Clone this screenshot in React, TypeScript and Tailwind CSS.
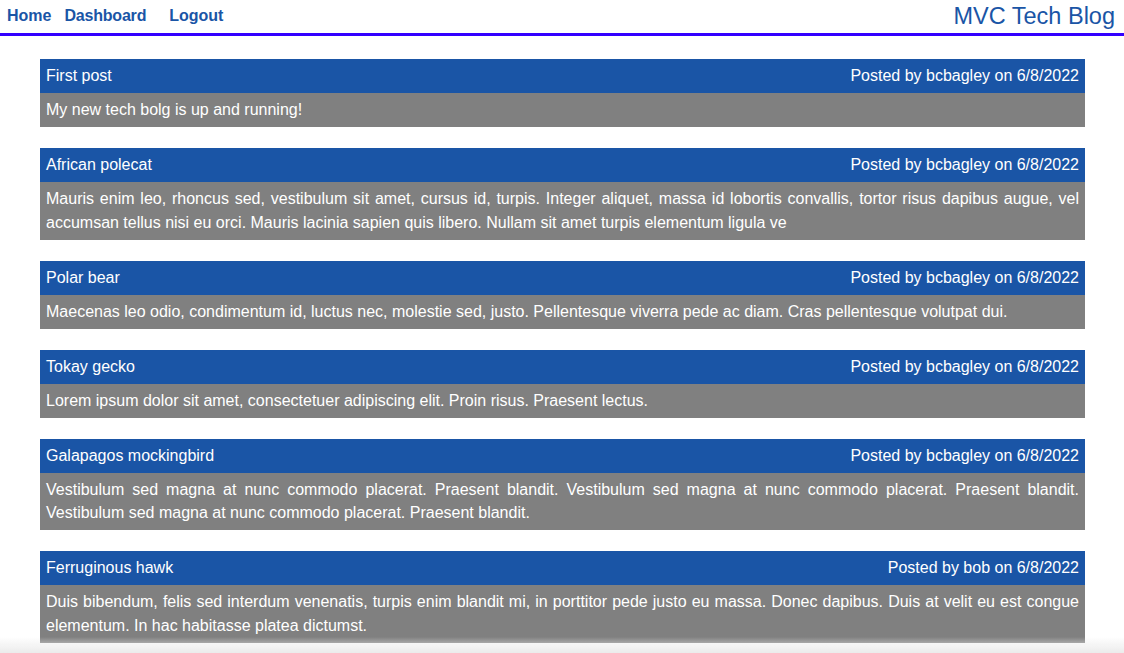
import React from "react";

const posts = [
  { title: "First post", author: "bcbagley", body: "My new tech bolg is up and running!" },
  { title: "African polecat", author: "bcbagley", body: "Mauris enim leo, rhoncus sed, vestibulum sit amet, cursus id, turpis. Integer aliquet, massa id lobortis convallis, tortor risus dapibus augue, vel accumsan tellus nisi eu orci. Mauris lacinia sapien quis libero. Nullam sit amet turpis elementum ligula ve" },
  { title: "Polar bear", author: "bcbagley", body: "Maecenas leo odio, condimentum id, luctus nec, molestie sed, justo. Pellentesque viverra pede ac diam. Cras pellentesque volutpat dui." },
  { title: "Tokay gecko", author: "bcbagley", body: "Lorem ipsum dolor sit amet, consectetuer adipiscing elit. Proin risus. Praesent lectus." },
  { title: "Galapagos mockingbird", author: "bcbagley", body: "Vestibulum sed magna at nunc commodo placerat. Praesent blandit. Vestibulum sed magna at nunc commodo placerat. Praesent blandit. Vestibulum sed magna at nunc commodo placerat. Praesent blandit." },
  { title: "Ferruginous hawk", author: "bob", body: "Duis bibendum, felis sed interdum venenatis, turpis enim blandit mi, in porttitor pede justo eu massa. Donec dapibus. Duis at velit eu est congue elementum. In hac habitasse platea dictumst." },
];

export default function App() {
  return (
    <div className="min-h-screen bg-white text-white" style={{ fontFamily: '"Liberation Sans", Arial, sans-serif' }}>
      <header className="flex h-[36px] items-start justify-between border-b-[3px] border-[#3300ff] pl-[7px] pr-[9px]">
        <nav className="flex pt-[6px] text-[16px] font-bold leading-[20px] text-[#1a55a6]">
          <a className="mr-[13px]">Home</a>
          <a className="mr-[23px] tracking-[-0.2px]">Dashboard</a>
          <a>Logout</a>
        </nav>
        <h1 className="pt-[2px] text-[23.5px] font-normal leading-[28px] text-[#1a55a6]">MVC Tech Blog</h1>
      </header>
      <main className="flex flex-col gap-[21px] pl-[40px] pr-[39px] pt-[23px] pb-[10px]">
        {posts.map((p) => (
          <section key={p.title} className="flex flex-col">
            <div className="flex h-[34px] items-center justify-between bg-[#1a55a6] px-[6px] text-[16px] leading-[20px]">
              <span>{p.title}</span>
              <span>Posted by {p.author} on 6/8/2022</span>
            </div>
            <p className="bg-[#808080] px-[6px] py-[5.25px] text-justify text-[16px] leading-[23.5px]">{p.body}</p>
          </section>
        ))}
      </main>
      <div className="pointer-events-none fixed bottom-0 left-0 right-0 h-[16px] bg-gradient-to-b from-[rgba(236,236,236,0)] to-[#ebebeb]" />
    </div>
  );
}
